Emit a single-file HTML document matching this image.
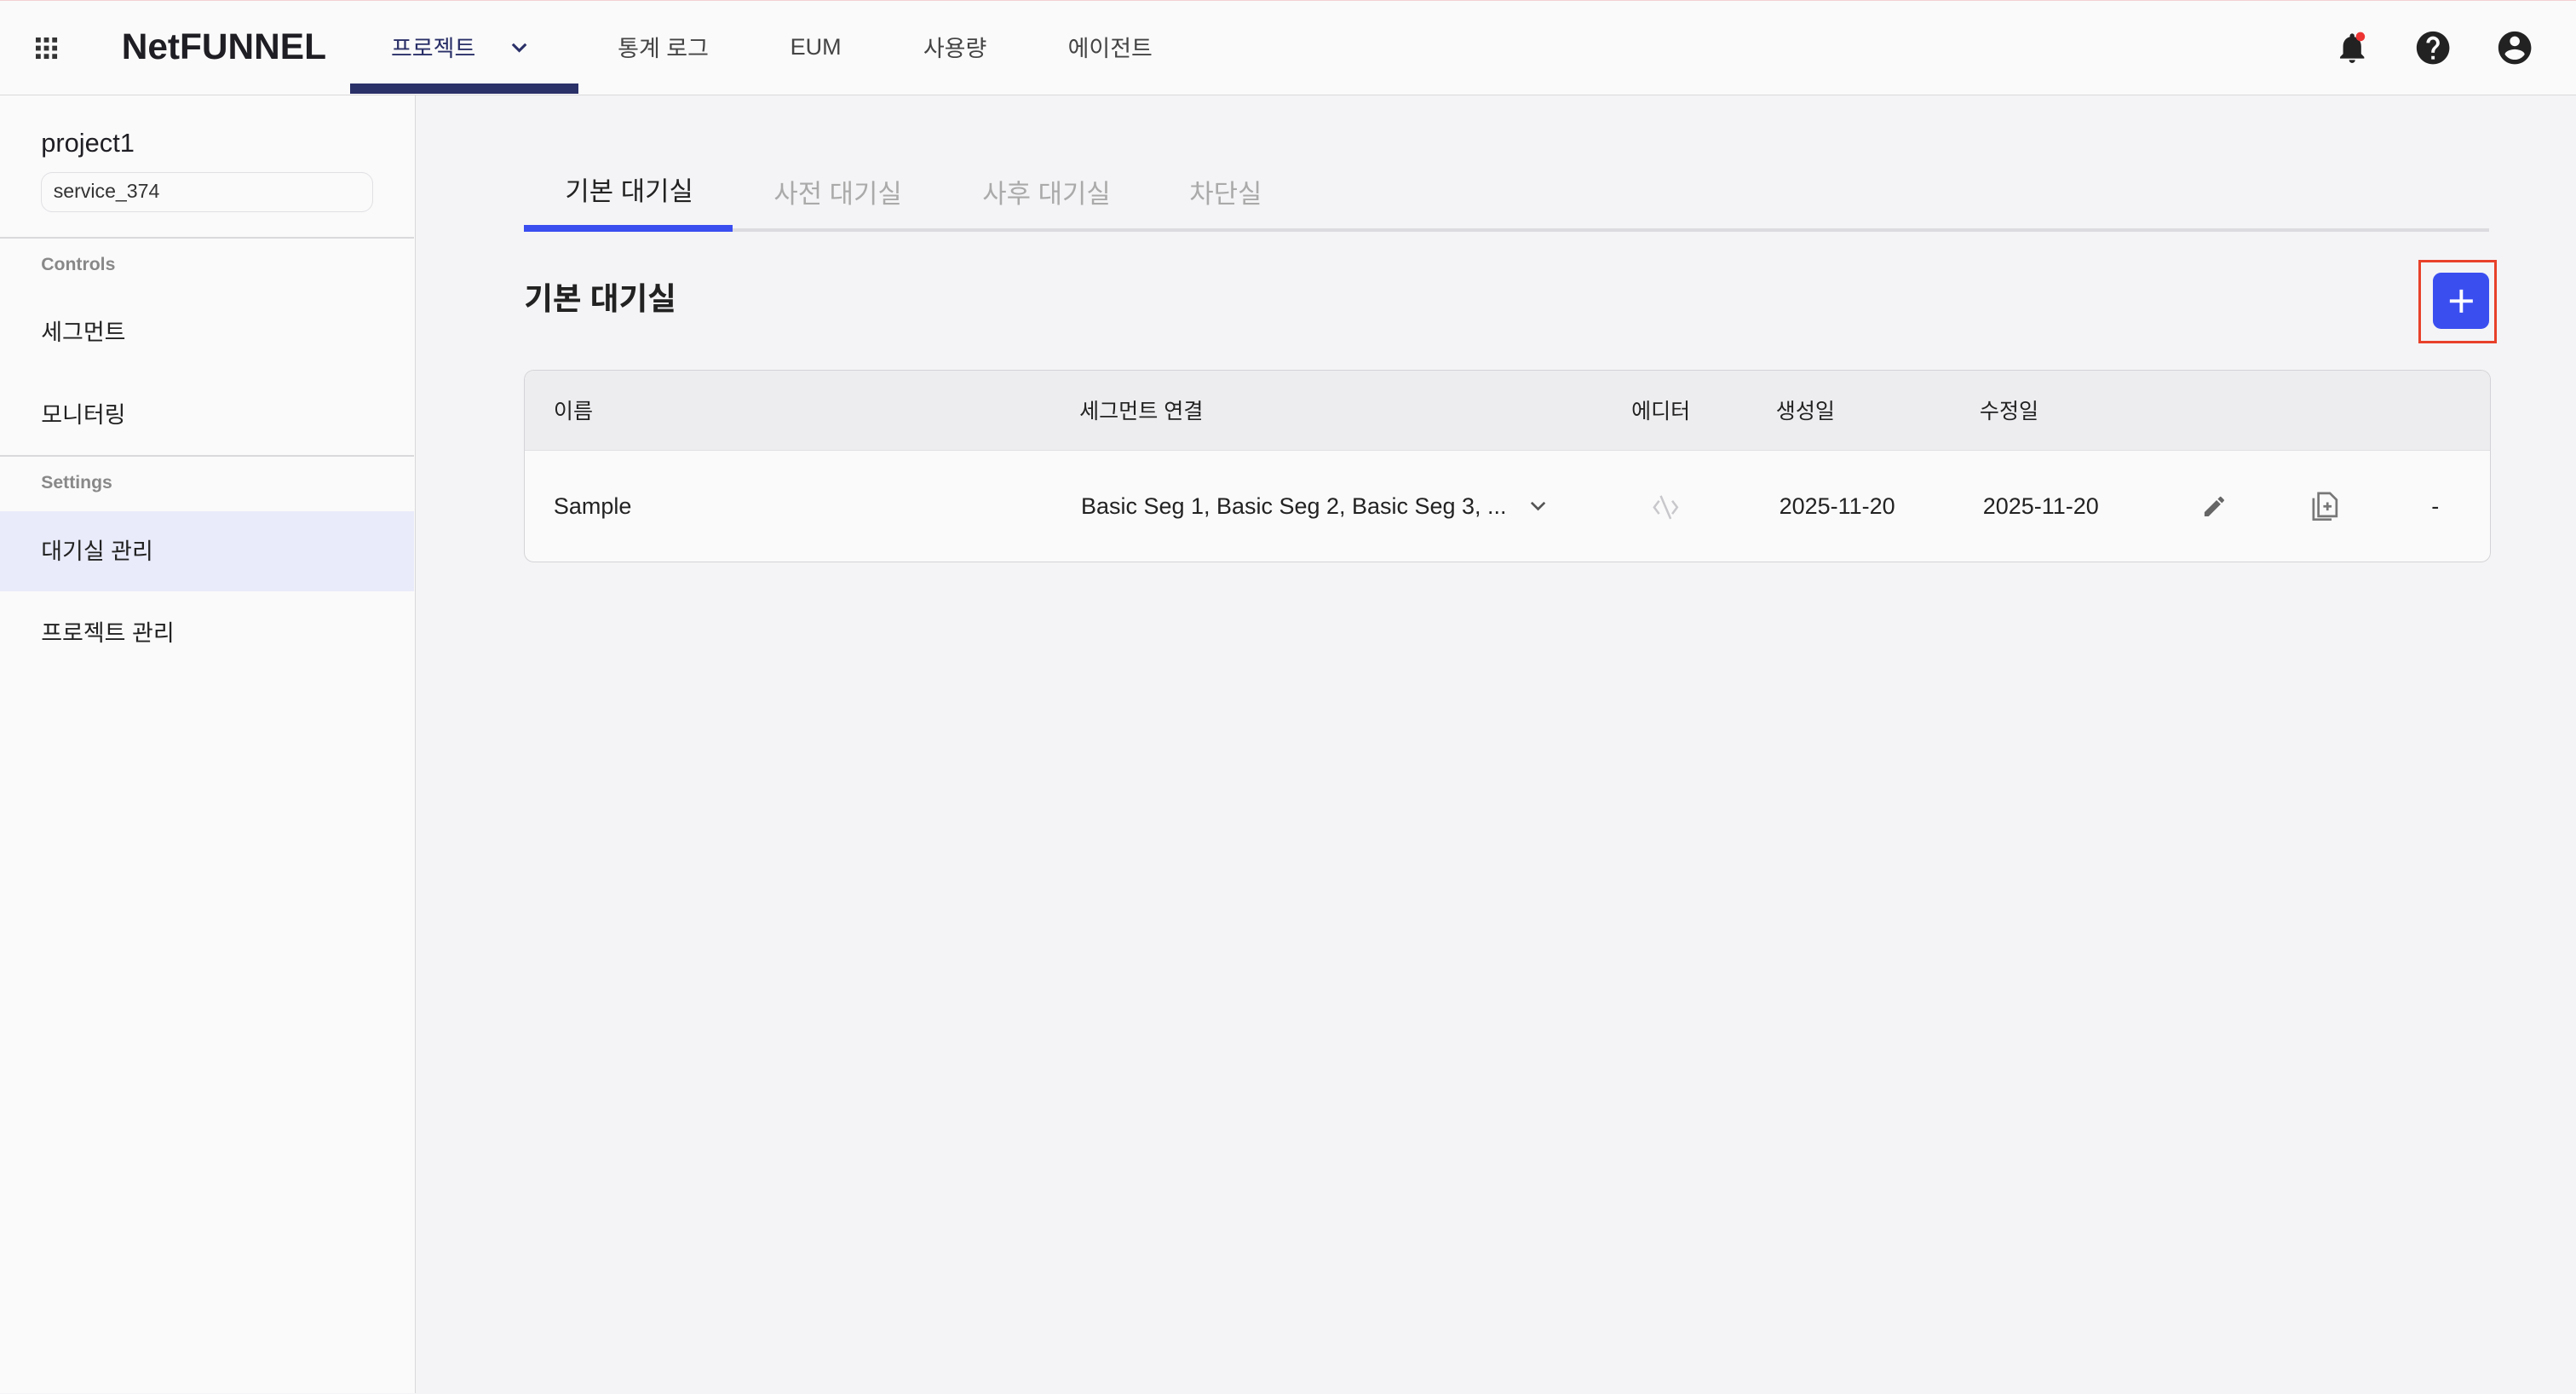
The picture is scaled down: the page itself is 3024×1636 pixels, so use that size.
<!DOCTYPE html>
<html><head><meta charset="utf-8"><style>
html{zoom:1.92857}
*{box-sizing:border-box;margin:0;padding:0}
body{width:1568px;height:848px;overflow:hidden;background:#f4f4f6;font-family:"Liberation Sans","Noto Sans CJK KR",sans-serif;color:#222;position:relative}
.a{position:absolute;white-space:nowrap}
</style></head><body>
<div class="a" style="left:0;top:0;width:1568px;height:58px;background:#fafafa;border-bottom:1px solid #d9d9dc;border-top:1px solid #f3cfd3"></div>
<svg class="a" style="left:22px;top:23px" width="14" height="14" viewBox="0 0 14 14" fill="#333"><g><rect x="0" y="0" width="3" height="3"/><rect x="5" y="0" width="3" height="3"/><rect x="10" y="0" width="3" height="3"/><rect x="0" y="5" width="3" height="3"/><rect x="5" y="5" width="3" height="3"/><rect x="10" y="5" width="3" height="3"/><rect x="0" y="10" width="3" height="3"/><rect x="5" y="10" width="3" height="3"/><rect x="10" y="10" width="3" height="3"/></g></svg>
<div class="a" style="left:74px;top:16px;font-size:22px;font-weight:bold;letter-spacing:0;color:#1e1e24">NetFUNNEL</div>
<div class="a" style="left:238px;top:18px;font-size:14px;color:#2a3068">프로젝트</div>
<svg class="a" style="left:310px;top:24px" width="12" height="10" viewBox="0 0 12 10"><path d="M2 3l4 4 4-4" fill="none" stroke="#2a3068" stroke-width="1.6"/></svg>
<div class="a" style="left:213px;top:51px;width:139px;height:6px;background:#2a3068"></div>
<div class="a" style="left:376px;top:18px;font-size:14px;color:#444">통계 로그</div>
<div class="a" style="left:481px;top:21px;font-size:14px;color:#444">EUM</div>
<div class="a" style="left:562px;top:18px;font-size:14px;color:#444">사용량</div>
<div class="a" style="left:650px;top:18px;font-size:14px;color:#444">에이전트</div>
<svg class="a" style="left:1421px;top:18px" width="22" height="22" viewBox="0 0 24 24"><path d="M12 22c1.1 0 2-.9 2-2h-4c0 1.1.9 2 2 2zm6-6v-5c0-3.070-1.64-5.64-4.5-6.32V4c0-.83-.67-1.5-1.5-1.5s-1.5.67-1.5 1.5v.68C7.630 5.36 6 7.92 6 11v5l-2 2v1h16v-1l-2-2z" fill="#222"/><circle cx="17.5" cy="4.5" r="3" fill="#e33"/></svg>
<svg class="a" style="left:1469px;top:17px" width="24" height="24" viewBox="0 0 24 24"><path d="M12 2C6.48 2 2 6.48 2 12s4.48 10 10 10 10-4.48 10-10S17.52 2 12 2zm1 17h-2v-2h2v2zm2.07-7.75l-.9.92C13.45 12.9 13 13.5 13 15h-2v-.5c0-1.1.45-2.1 1.17-2.83l1.24-1.26c.37-.36.59-.86.59-1.41 0-1.1-.9-2-2-2s-2 .9-2 2H8c0-2.21 1.79-4 4-4s4 1.79 4 4c0 .88-.36 1.68-.93 2.25z" fill="#222"/></svg>
<svg class="a" style="left:1519px;top:17px" width="24" height="24" viewBox="0 0 24 24"><path d="M12 2C6.48 2 2 6.48 2 12s4.48 10 10 10 10-4.48 10-10S17.52 2 12 2zm0 3c1.66 0 3 1.34 3 3s-1.34 3-3 3-3-1.34-3-3 1.34-3 3-3zm0 14.2c-2.5 0-4.71-1.28-6-3.22.03-1.99 4-3.08 6-3.08 1.99 0 5.97 1.09 6 3.08-1.29 1.94-3.5 3.220-6 3.22z" fill="#222"/></svg>

<div class="a" style="left:0;top:58px;width:253px;height:790px;background:#fafafa;border-right:1px solid #d9d9dc"></div>
<div class="a" style="left:25px;top:78px;font-size:16px;color:#1e1e24">project1</div>
<div class="a" style="left:25px;top:105px;width:202px;height:24px;border:1px solid #e0e0e4;border-radius:7px;font-size:12px;padding:4px 7px;color:#333">service_374</div>
<div class="a" style="left:0;top:144px;width:252px;height:1px;background:#d9d9dc"></div>
<div class="a" style="left:25px;top:155px;font-size:11px;color:#888;font-weight:bold">Controls</div>
<div class="a" style="left:25px;top:191px;font-size:14px">세그먼트</div>
<div class="a" style="left:25px;top:241px;font-size:14px">모니터링</div>
<div class="a" style="left:0;top:277px;width:252px;height:1px;background:#d9d9dc"></div>
<div class="a" style="left:25px;top:288px;font-size:11px;color:#888;font-weight:bold">Settings</div>
<div class="a" style="left:0;top:311px;width:252px;height:49px;background:#e9ebfa"></div>
<div class="a" style="left:25px;top:324px;font-size:14px">대기실 관리</div>
<div class="a" style="left:25px;top:374px;font-size:14px">프로젝트 관리</div>

<div class="a" style="left:320px;top:139px;width:1195px;height:2px;background:#dcdce0"></div>
<div class="a" style="left:319px;top:137px;width:127px;height:4px;background:#3a4ef0"></div>
<div class="a" style="left:344px;top:103px;font-size:16px;color:#222">기본 대기실</div>
<div class="a" style="left:471px;top:105px;font-size:16px;color:#aaa">사전 대기실</div>
<div class="a" style="left:598px;top:105px;font-size:16px;color:#aaa">사후 대기실</div>
<div class="a" style="left:724px;top:105px;font-size:16px;color:#aaa">차단실</div>
<div class="a" style="left:319px;top:166px;font-size:19px;font-weight:bold;color:#222">기본 대기실</div>
<div class="a" style="left:1472px;top:158px;width:48px;height:51px;border:2px solid #e8412a"></div>
<div class="a" style="left:1481px;top:166px;width:34px;height:34px;background:#3a4ef0;border-radius:5px"></div>
<svg class="a" style="left:1489px;top:174px" width="18" height="18" viewBox="0 0 18 18"><path d="M9 2v14M2 9h14" stroke="#fff" stroke-width="2"/></svg>

<div class="a" style="left:319px;top:225px;width:1197px;height:117px;border:1px solid #d4d4d8;border-radius:6px;overflow:hidden;background:#fafafa">
<div style="height:49px;background:#ededf0;border-bottom:1px solid #e0e0e4"></div></div>
<div class="a" style="left:337px;top:240px;font-size:13px;color:#222">이름</div>
<div class="a" style="left:657px;top:240px;font-size:13px;color:#222">세그먼트 연결</div>
<div class="a" style="left:993px;top:240px;font-size:13px;color:#222">에디터</div>
<div class="a" style="left:1081px;top:240px;font-size:13px;color:#222">생성일</div>
<div class="a" style="left:1205px;top:240px;font-size:13px;color:#222">수정일</div>
<div class="a" style="left:337px;top:300px;font-size:14px">Sample</div>
<div class="a" style="left:658px;top:300px;font-size:14px">Basic Seg 1, Basic Seg 2, Basic Seg 3, ...</div>
<svg class="a" style="left:930px;top:303px" width="12" height="10" viewBox="0 0 12 10"><path d="M2 3l4 4 4-4" fill="none" stroke="#555" stroke-width="1.4"/></svg>
<svg class="a" style="left:1005px;top:301px" width="18" height="16" viewBox="0 0 18 16"><path d="M5 4L2 8l3 4M13 4l3 4-3 4M6 1l6 14" fill="none" stroke="#c8c8cc" stroke-width="1.3"/></svg>
<div class="a" style="left:1083px;top:300px;font-size:14px">2025-11-20</div>
<div class="a" style="left:1207px;top:300px;font-size:14px">2025-11-20</div>
<svg class="a" style="left:1340px;top:300px" width="16" height="16" viewBox="0 0 24 24"><path d="M3 17.25V21h3.75L17.81 9.94l-3.75-3.75L3 17.25zM20.71 7.04a1 1 0 000-1.41l-2.34-2.34a1 1 0 00-1.41 0l-1.83 1.83 3.75 3.75 1.83-1.83z" fill="#666"/></svg>
<svg class="a" style="left:1406px;top:298px" width="19" height="20" viewBox="0 0 19 20"><path d="M2 5v13h11" fill="none" stroke="#777" stroke-width="1.4"/><path d="M5 2h7l4 4v10H5z" fill="none" stroke="#777" stroke-width="1.4"/><path d="M10.5 7.5v5M8 10h5" stroke="#777" stroke-width="1.4"/></svg>
<div class="a" style="left:1480px;top:300px;font-size:14px">-</div>
</body></html>
